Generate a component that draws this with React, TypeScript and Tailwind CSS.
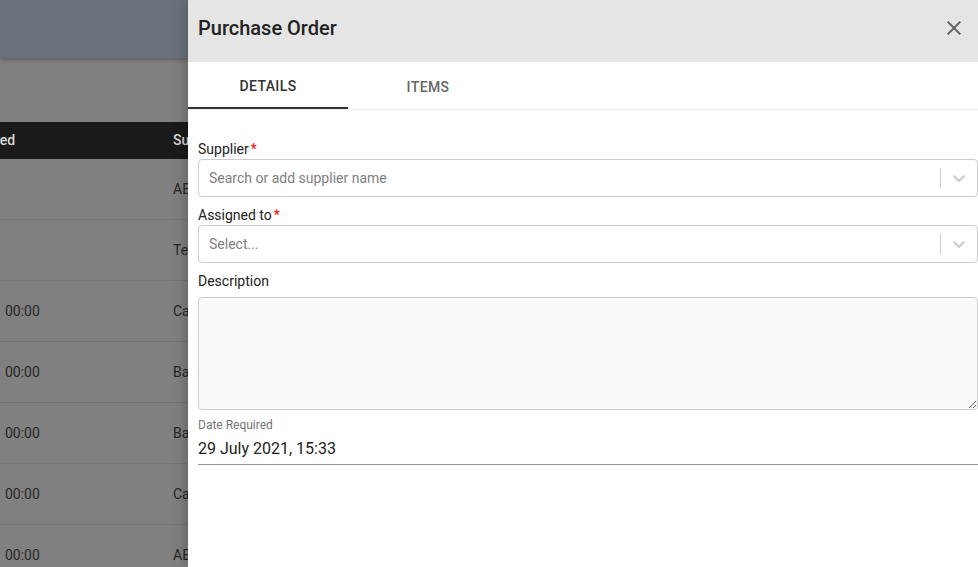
import React from "react";

type Row = { date: string; supplier: string };

const rows: Row[] = [
  { date: "", supplier: "ABC Supplies" },
  { date: "", supplier: "Test Supplier" },
  { date: "29/07/2021 00:00", supplier: "Castle Trading" },
  { date: "29/07/2021 00:00", supplier: "Barker Ltd" },
  { date: "29/07/2021 00:00", supplier: "Barker Ltd" },
  { date: "29/07/2021 00:00", supplier: "Castle Trading" },
  { date: "29/07/2021 00:00", supplier: "ABC Supplies" },
];

function Chevron() {
  return (
    <svg viewBox="0 0 20 20" width="20" height="20" fill="#cccccc" aria-hidden="true">
      <path d="M4.516 7.548c0.436-0.446 1.043-0.481 1.576 0l3.908 3.747 3.908-3.747c0.533-0.481 1.141-0.446 1.574 0 0.436 0.445 0.408 1.197 0 1.615-0.406 0.418-4.695 4.502-4.695 4.502-0.217 0.223-0.502 0.335-0.787 0.335s-0.57-0.112-0.789-0.335c0 0-4.287-4.084-4.695-4.502s-0.436-1.17 0-1.615z" />
    </svg>
  );
}

function SelectBox({ placeholder }: { placeholder: string }) {
  return (
    <div className="flex h-[38px] items-center rounded-[4px] border border-[#cccccc] bg-white">
      <div className="flex-1 px-[10px] text-[14px] text-[#808080]">{placeholder}</div>
      <span className="my-2 h-5 w-px bg-[#cccccc]" />
      <div className="p-2">
        <Chevron />
      </div>
    </div>
  );
}

function Label({ text, required }: { text: string; required?: boolean }) {
  return (
    <div className="text-[14px] leading-5 text-[#222222]">
      {text}
      {required ? <span className="ml-[2px] text-[#ff0000]">*</span> : null}
    </div>
  );
}

export default function App() {
  return (
    <div
      className="relative h-screen w-full overflow-hidden bg-[#808080]"
      style={{ fontFamily: "Roboto, 'Noto Sans', sans-serif" }}
    >
      {/* dimmed page behind the drawer */}
      <div className="h-[58px] bg-[#6b727c] shadow-[0_2px_4px_rgba(0,0,0,0.25)]" />
      <div className="mt-[64px] -ml-[73px]">
        <div className="flex h-[37px] items-center bg-[#1a1a1a] text-[14px] font-medium text-[#d9d9d9]">
          <div className="w-[246px]">Date Required</div>
          <div>Supplier</div>
        </div>
        {rows.map((row, i) => (
          <div
            key={i}
            className="flex h-[61px] items-center border-b border-[#767676] text-[14px] text-[#262626]"
          >
            <div className="w-[246px]">{row.date}</div>
            <div>{row.supplier}</div>
          </div>
        ))}
      </div>

      {/* drawer */}
      <div className="absolute top-0 bottom-0 left-[188px] w-[800px] bg-white shadow-[-4px_0_12px_rgba(0,0,0,0.2)]">
        <div className="flex h-[62px] items-center justify-between bg-[#e5e5e5] pb-[6px] pl-[10px] pr-[22px]">
          <h1 className="text-[20px] font-medium text-[#222222]">Purchase Order</h1>
          <svg viewBox="0 0 24 24" width="24" height="24" fill="#666666" aria-label="Close">
            <path d="M19 6.41L17.59 5 12 10.59 6.41 5 5 6.41 10.59 12 5 17.59 6.41 19 12 13.41 17.59 19 19 17.59 13.41 12z" />
          </svg>
        </div>

        <div className="flex h-[48px] border-b border-[#eeeeee]">
          <div className="flex w-[160px] flex-col">
            <div className="flex flex-1 items-center justify-center pt-[4px] text-[14px] font-medium tracking-[0.4px] text-[#333333]">
              DETAILS
            </div>
            <div className="h-[2px] bg-[#333333]" />
          </div>
          <div className="flex w-[160px] items-center justify-center pt-[4px] text-[14px] font-medium tracking-[0.4px] text-[#666666]">
            ITEMS
          </div>
        </div>

        <div className="px-[10px] pt-[29px]">
          <Label text="Supplier" required />
          <SelectBox placeholder="Search or add supplier name" />

          <div className="mt-2">
            <Label text="Assigned to" required />
          </div>
          <SelectBox placeholder="Select..." />

          <div className="mt-2">
            <Label text="Description" />
          </div>
          <textarea className="mt-[6px] block h-[113px] w-full rounded-[4px] border border-[#cccccc] bg-[#fafafa] outline-none" />

          <div className="mt-[7px] text-[12px] leading-4 text-[#757575]">Date Required</div>
          <div className="border-b border-[#949494] pt-[5px] pb-[4px] text-[16px] leading-[22px] text-[#212121]">
            29 July 2021, 15:33
          </div>
        </div>
      </div>
    </div>
  );
}
